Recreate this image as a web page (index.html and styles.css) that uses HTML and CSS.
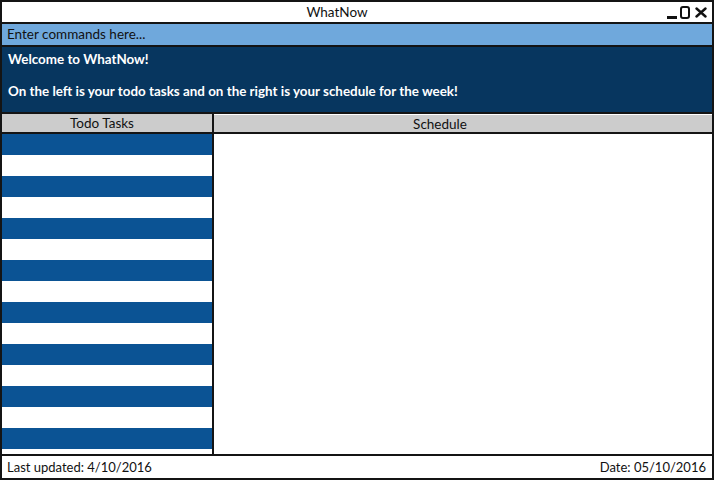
FILE: index.html
```html
<!DOCTYPE html>
<html>
<head>
<meta charset="utf-8">
<title>WhatNow</title>
<link rel="stylesheet" href="styles.css">
</head>
<body>
<div class="window">
  <div class="titlebar">
    <span class="title">WhatNow</span>
    <div class="controls">
      <span class="ctl-min"></span>
      <span class="ctl-max"></span>
      <svg class="ctl-close" width="12" height="11" viewBox="0 0 12 11"><path d="M1.5 1.5 L10.5 9.5 M10.5 1.5 L1.5 9.5" stroke="#111" stroke-width="2.4" stroke-linecap="round"/></svg>
    </div>
  </div>
  <div class="command">Enter commands here...</div>
  <div class="welcome">
    <p class="w-line">Welcome to WhatNow!</p>
    <p class="w-line">On the left is your todo tasks and on the right is your schedule for the week!</p>
  </div>
  <div class="main">
    <div class="todo">
      <div class="header header-l">Todo Tasks</div>
      <div class="rows">
        <div class="row blue"></div><div class="row"></div>
        <div class="row blue"></div><div class="row"></div>
        <div class="row blue"></div><div class="row"></div>
        <div class="row blue"></div><div class="row"></div>
        <div class="row blue"></div><div class="row"></div>
        <div class="row blue"></div><div class="row"></div>
        <div class="row blue"></div><div class="row"></div>
        <div class="row blue"></div><div class="row"></div>
      </div>
    </div>
    <div class="schedule">
      <div class="header header-r">Schedule</div>
      <div class="sched-body"></div>
    </div>
  </div>
  <div class="footer">
    <span>Last updated: 4/10/2016</span>
    <span>Date: 05/10/2016</span>
  </div>
</div>
</body>
</html>
```
FILE: styles.css
```css
html, body {
  margin: 0;
  padding: 0;
  background: #ffffff;
}
body {
  font-family: "Lato", "Noto Sans", sans-serif;
  color: #111;
}
.window {
  width: 714px;
  height: 480px;
  box-sizing: border-box;
  border: 2px solid #141414;
  display: flex;
  flex-direction: column;
  overflow: hidden;
}
.titlebar {
  height: 20px;
  border-bottom: 2px solid #141414;
  display: flex;
  align-items: center;
  justify-content: center;
  position: relative;
  font-size: 13.5px;
  background: #fff;
}
.title {
  margin-right: 40px;
}
.controls {
  position: absolute;
  right: 5px;
  top: 4px;
  display: flex;
  align-items: flex-end;
  gap: 3px;
}
.ctl-min {
  width: 10px;
  height: 3px;
  background: #111;
}
.ctl-max {
  width: 6px;
  height: 9px;
  border: 2px solid #111;
  border-radius: 3px;
}
.ctl-close {
  margin-left: 2px;
  margin-bottom: 1px;
}
.command {
  height: 21px;
  border-bottom: 2px solid #141414;
  background: #6fa8dc;
  font-size: 13.5px;
  line-height: 21px;
  padding-left: 5px;
  color: #111;
}
.welcome {
  height: 67px;
  box-sizing: border-box;
  border-bottom: 2px solid #141414;
  background: #07365f;
  color: #fff;
  font-weight: bold;
  font-size: 13.4px;
  padding: 4px 6px 0;
}
.w-line {
  margin: 0 0 16px;
  line-height: 16px;
}
.main {
  flex: 1;
  display: flex;
  min-height: 0;
}
.todo {
  width: 210px;
  border-right: 2px solid #141414;
  display: flex;
  flex-direction: column;
}
.schedule {
  flex: 1;
  display: flex;
  flex-direction: column;
}
.header {
  height: 18px;
  border-bottom: 2px solid #141414;
  background: #cccccc;
  font-size: 13.5px;
  line-height: 19px;
  text-align: center;
}
.header-l {
  padding-right: 10px;
}
.header-r {
  margin-top: 1px;
  height: 17px;
  padding-right: 46px;
}
.rows {
  flex: 1;
  overflow: hidden;
}
.row {
  height: 21px;
  background: #fff;
}
.row.blue {
  background: #0b5394;
}
.sched-body {
  flex: 1;
  background: #fff;
}
.footer {
  height: 22px;
  border-top: 2px solid #141414;
  display: flex;
  justify-content: space-between;
  align-items: center;
  font-size: 13px;
  padding: 0 6px 0 5px;
}
```
